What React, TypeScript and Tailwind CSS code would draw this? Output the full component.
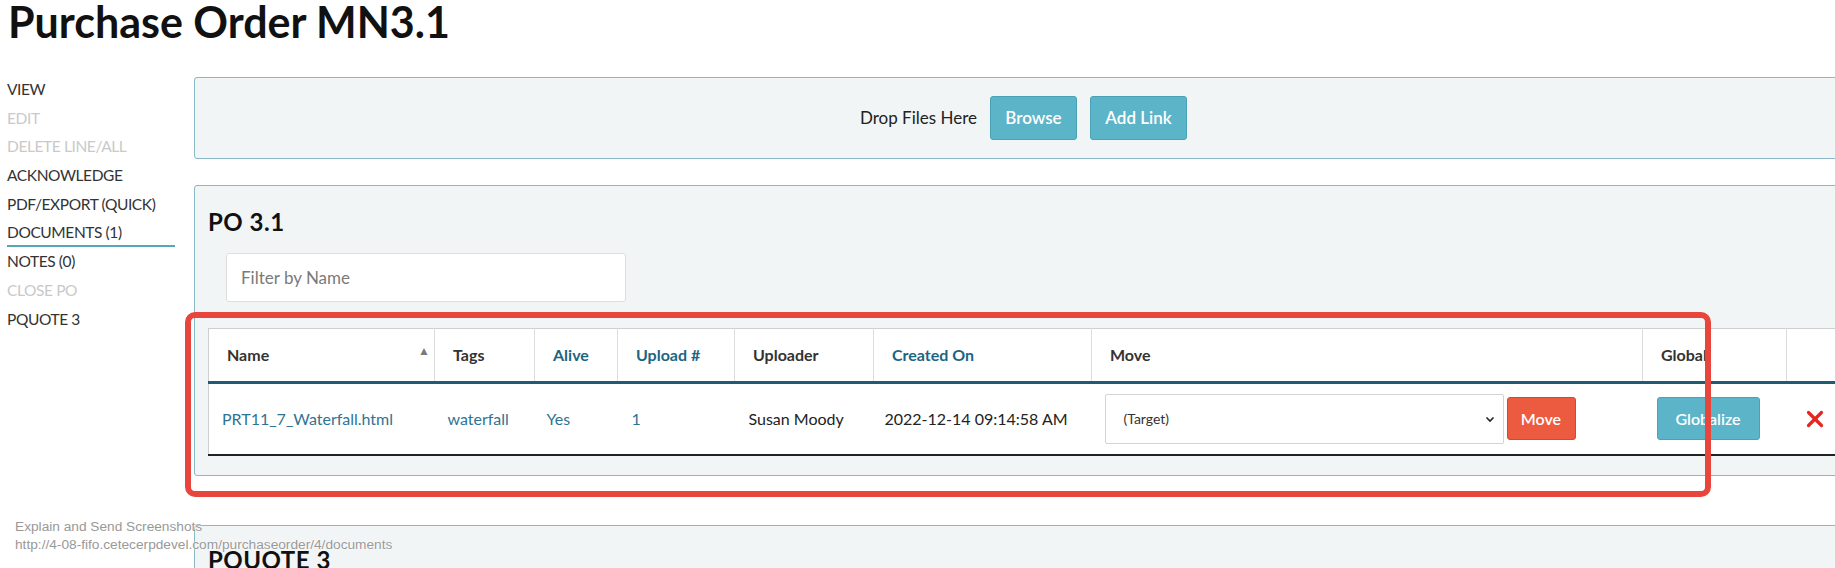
import { X } from "lucide-react";

const sideItems = [
  { label: "VIEW", muted: false },
  { label: "EDIT", muted: true },
  { label: "DELETE LINE/ALL", muted: true },
  { label: "ACKNOWLEDGE", muted: false },
  { label: "PDF/EXPORT (QUICK)", muted: false },
  { label: "DOCUMENTS (1)", muted: false, active: true },
  { label: "NOTES (0)", muted: false },
  { label: "CLOSE PO", muted: true },
  { label: "PQUOTE 3", muted: false },
];

const headers = [
  { label: "Name", sort: true, link: false },
  { label: "Tags", link: false },
  { label: "Alive", link: true },
  { label: "Upload #", link: true },
  { label: "Uploader", link: false },
  { label: "Created On", link: true },
  { label: "Move", link: false },
  { label: "Global", link: false },
  { label: "", link: false },
];

const colWidths = [226, 100, 83, 117, 139, 218, 551, 144, 80];

function SideNav() {
  return (
    <nav className="ml-[7px] flex w-[168px] shrink-0 flex-col">
      {sideItems.map((item) => (
        <div
          key={item.label}
          className={
            "h-[28.7px] whitespace-nowrap text-[15.5px] leading-[28.7px] tracking-[-0.4px] " +
            (item.muted ? "text-[#c9c9c9] " : "text-[#333] ") +
            (item.active ? "border-b-2 border-[#5aa6b7]" : "")
          }
        >
          {item.label}
        </div>
      ))}
    </nav>
  );
}

function DocumentsTable() {
  return (
    <table className="table-fixed border-collapse bg-white" style={{ width: 1658 }}>
      <colgroup>
        {colWidths.map((w, i) => (
          <col key={i} style={{ width: w }} />
        ))}
      </colgroup>
      <thead>
        <tr className="h-[54px]">
          {headers.map((h, i) => (
            <th
              key={i}
              className={
                "border-t border-r border-b-[3px] border-t-[#cfcfcf] border-r-[#dcdcdc] border-b-[#1f5b73] pl-[18px] text-left text-[16px] font-bold " +
                (i === 0 ? "border-l border-l-[#cfcfcf] " : "") +
                (h.link ? "text-[#1d6582]" : "text-[#333]")
              }
            >
              {h.sort ? (
                <div className="flex items-center justify-between pr-[4px]">
                  <span>{h.label}</span>
                  <span className="-mt-[8px] text-[12px] text-[#7a7a7a]">▲</span>
                </div>
              ) : (
                h.label
              )}
            </th>
          ))}
        </tr>
      </thead>
      <tbody>
        <tr className="h-[72px] border-b-2 border-[#222] text-[16px]">
          <td className="border-l border-l-[#cfcfcf] pl-[13px] text-[#2f7394]">PRT11_7_Waterfall.html</td>
          <td className="pl-[13px] text-[#2f7394]">waterfall</td>
          <td className="pl-[12px] text-[#2f7394]">Yes</td>
          <td className="pl-[14px] text-[#2f7394]">1</td>
          <td className="pl-[14px] text-[#222]">Susan Moody</td>
          <td className="pl-[11px] text-[#222]">2022-12-14 09:14:58 AM</td>
          <td className="pl-[13px]">
            <div className="flex items-center gap-[3px]">
              <div className="flex h-[50px] w-[399px] items-center justify-between rounded-[2px] border border-[#d4d4d4] bg-white pl-[18px] pr-[8px] text-[14px] text-[#333]">
                <span>(Target)</span>
                <svg width="10" height="10" viewBox="0 0 10 10" fill="none">
                  <path d="M1.5 3.5 L5 7 L8.5 3.5" stroke="#222" strokeWidth="1.6" />
                </svg>
              </div>
              <button className="h-[43px] w-[69px] rounded-[3px] border border-[#d04a30] bg-[#ec5b40] text-[16px] font-semibold text-white">
                Move
              </button>
            </div>
          </td>
          <td className="pl-[14px]">
            <button className="h-[43px] w-[103px] rounded-[3px] border border-[#4aa2b6] bg-[#5cb4c8] text-[16px] font-semibold text-white">
              Globalize
            </button>
          </td>
          <td className="pl-[15px]">
            <X size={26} strokeWidth={3} color="#e5271f" />
          </td>
        </tr>
      </tbody>
    </table>
  );
}

export default function App() {
  return (
    <div className="relative h-[568px] w-[1835px] overflow-hidden bg-white font-['Lato',sans-serif] text-[#333]">
      <h1 className="pl-[8px] text-[43px] font-bold leading-[43px] text-[#111]">Purchase Order MN3.1</h1>

      <div className="mt-[32px] flex items-start">
        <SideNav />

        <main className="ml-[19px] mt-[2px] flex w-[1659px] shrink-0 flex-col">
          <section className="flex h-[82px] items-center justify-center gap-[13px] rounded-[3px] border border-[#8ab8c6] bg-[#f1f5f6]">
            <span className="text-[17px] text-[#222]">Drop Files Here</span>
            <button className="h-[44px] w-[87px] rounded-[3px] border border-[#4aa2b6] bg-[#5cb4c8] text-[17px] font-semibold text-white">
              Browse
            </button>
            <button className="h-[44px] w-[97px] rounded-[3px] border border-[#4aa2b6] bg-[#5cb4c8] text-[17px] font-semibold text-white">
              Add Link
            </button>
          </section>

          <section className="mt-[26px] h-[291px] overflow-hidden rounded-[3px] border border-[#8ab8c6] bg-[#f1f5f6] pl-[13px] pt-[21px]">
            <h2 className="text-[24px] font-bold leading-[30px] tracking-[0.5px] text-[#111]">PO 3.1</h2>
            <input
              placeholder="Filter by Name"
              className="ml-[18px] mt-[16px] block h-[49px] w-[400px] rounded-[3px] border border-[#dedede] bg-white pl-[14px] text-[17px] text-[#333] placeholder:text-[#7a7a7a] outline-none"
            />
            <div className="mt-[26px]">
              <DocumentsTable />
            </div>
          </section>

          <section className="mt-[49px] h-[120px] rounded-[3px] border border-[#8ab8c6] bg-[#f1f5f6] pl-[13px] pt-[19px]">
            <h2 className="text-[24px] font-bold leading-[30px] tracking-[0.5px] text-[#111]">PQUOTE 3</h2>
          </section>
        </main>
      </div>

      <div className="pointer-events-none absolute left-[185px] top-[312px] h-[185px] w-[1526px] rounded-[10px] border-[6px] border-[#e8453c]" />

      <div className="pointer-events-none absolute left-[15px] top-[518px] font-['Liberation_Sans',Arial,sans-serif] text-[13.7px] leading-[18px] text-[#999] [text-shadow:0_0_2px_#fff,0_0_1px_#fff]">
        <div>Explain and Send Screenshots</div>
        <div>http://4-08-fifo.cetecerpdevel.com/purchaseorder/4/documents</div>
      </div>
    </div>
  );
}
